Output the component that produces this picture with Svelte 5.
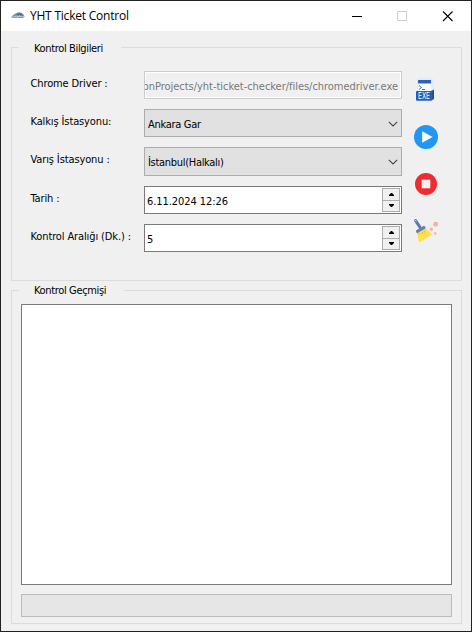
<script>
  const fields = [
    { label: 'Chrome Driver :', kind: 'path', value: 'onProjects/yht-ticket-checker/files/chromedriver.exe' },
    { label: 'Kalkış İstasyonu:', kind: 'select', value: 'Ankara Gar' },
    { label: 'Varış İstasyonu :', kind: 'select', value: 'İstanbul(Halkalı)', tall: true },
    { label: 'Tarih :', kind: 'spin', value: '6.11.2024 12:26', date: true },
    { label: 'Kontrol Aralığı (Dk.) :', kind: 'spin', value: '5' }
  ];
</script>

<div class="window">
  <header>
    <svg class="logo" width="16" height="16" viewBox="0 0 16 16">
      <path d="M1 9.3 Q5 4.8 9 4.3 Q13 4.8 14.6 8.5 L13 10 L2 10Z" fill="#7994ae" />
      <path d="M6 6 L11 5 L13 7 L8 8Z" fill="#456f98" />
      <path d="M1 9.5 L7 8.2 L14 8.8 M7 10 L10 7" stroke="#d7e2ea" stroke-width=".7" fill="none" />
    </svg>
    <span class="title">YHT Ticket Control</span>
    <svg class="controls" width="138" height="29" viewBox="0 0 138 29" shape-rendering="crispEdges">
      <path d="M19 14.5H29" stroke="#000" />
      <rect x="64.5" y="9.5" width="9" height="9" fill="none" stroke="#ccc" />
      <path d="M110 9.5L119.5 19M119.5 9.5L110 19" stroke="#000" stroke-width="1.1" shape-rendering="auto" />
    </svg>
  </header>

  <main>
    <section class="group info">
      <h2>Kontrol Bilgileri</h2>
      <div class="form">
        {#each fields as f}
          <div class="row" class:tall={f.tall}>
            <span class="label">{f.label}</span>
            <div class="field {f.kind}">
              <span class="value" class:date={f.date}>{f.value}</span>
              {#if f.kind === 'select'}
                <svg class="chevron" width="10" height="6" viewBox="0 0 10 6"><path d="M.8 .8L5 5L9.2 .8" fill="none" stroke="#444" stroke-width="1.1" /></svg>
              {:else if f.kind === 'spin'}
                <div class="arrows">
                  <i><svg width="5" height="3" viewBox="0 0 5 3"><path d="M0 3V2L2 0H3L5 2V3Z" /></svg></i>
                  <i><svg width="5" height="3" viewBox="0 0 5 3"><path d="M0 0V1L2 3H3L5 1V0Z" /></svg></i>
                </div>
              {/if}
            </div>
          </div>
        {/each}
      </div>
      <div class="actions">
        <svg width="24" height="24" viewBox="0 0 24 24">
          <path d="M3 1.5Q3 0 4.5 0H18L20 2V18H3Z" fill="#e4eaf8" />
          <rect x="4" y="2" width="13" height="11" fill="#fff" />
          <path d="M4 2H17V5.5H4Z" fill="#2864bc" />
          <path d="M5 7.5L7.5 9.5L5 11.5M8 11.5H11" fill="none" stroke="#3470c0" stroke-width="1" />
          <path d="M17 13L20 11.5V21L17.5 22.5Z" fill="#20529c" />
          <rect x="2" y="13" width="16" height="9.7" rx="1" fill="#285eb5" />
          <text x="4" y="21" textLength="12" lengthAdjust="spacingAndGlyphs" font-size="8.5" fill="#fff">EXE</text>
        </svg>
        <svg width="24" height="24" viewBox="0 0 24 24">
          <circle cx="12" cy="12" r="12" fill="#2196f3" />
          <path d="M8.2 6.2L18.5 12L8.2 17.8Z" fill="#fff" />
        </svg>
        <svg width="24" height="24" viewBox="0 0 24 24">
          <circle cx="12" cy="12" r="11" fill="#ee2c30" />
          <rect x="7.7" y="7.7" width="8.6" height="8.6" fill="#f5eff0" />
        </svg>
        <svg width="24" height="24" viewBox="0 0 24 24">
          <path d="M1.6 1.6L7 9.8" stroke="#5977b1" stroke-width="3" stroke-linecap="round" />
          <path d="M1.5 1.4L2.1 2.3" stroke="#c4d0e4" stroke-width="1" stroke-linecap="round" />
          <path d="M2.5 12.8L10.5 8L18.3 15.8L5.2 23.4Z" fill="#ffe04f" />
          <path d="M2.2 11.2L9.8 6.8Q12 7.5 11.4 9.4L3.2 14.2Q1.4 13.2 2.2 11.2Z" fill="#6680b5" />
          <path d="M5 15.5L6 14M8 15L8.5 13M10.5 13.5L10.2 11.7" stroke="#efa34c" stroke-width=".9" />
          <circle cx="21.7" cy="5.2" r="2.4" fill="#f5aaa0" /><circle cx="21.7" cy="5.2" r=".9" fill="#f7c39c" />
          <circle cx="17.2" cy="10.3" r="1.7" fill="#f2b1ac" />
          <circle cx="21.2" cy="14.5" r="1.4" fill="#f5bbb4" />
        </svg>
      </div>
    </section>

    <section class="group history">
      <h2>Kontrol Geçmişi</h2>
      <div class="log"></div>
      <div class="progress"></div>
    </section>
  </main>
</div>

<style>
  .window, .window * { box-sizing: border-box; }
  .window {
    width: 472px; height: 632px; border: 1px solid #222; background: #f0f0f0;
    display: flex; flex-direction: column; overflow: hidden; color: #000;
    font: 11px/14px "DejaVu Sans Condensed", "DejaVu Sans", sans-serif;
    font-stretch: condensed; white-space: nowrap;
  }
  svg { display: block; flex: none; }
  header { height: 30px; flex: none; background: #fff; display: flex; align-items: center; padding-left: 9px; }
  .title { font: 12px/16px "Open Sans", sans-serif; margin-left: 4px; letter-spacing: -0.22px; }
  .controls { margin-left: auto; }
  main { flex: 1; padding: 16px 9px 7px 10px; display: flex; flex-direction: column; gap: 9px; }
  .group { border: 1px solid #dcdcdc; position: relative; }
  h2 {
    position: absolute; top: -6px; left: 7px; width: 102px; height: 14px; margin: 0; padding-left: 15px;
    background: #f0f0f0; font: inherit; letter-spacing: -0.35px;
  }
  .history h2 { top: -7px; width: 105px; }
  .info { height: 234px; display: flex; padding: 23px 0 0 18px; }
  .form { width: 372px; display: flex; flex-direction: column; gap: 10px; }
  .row { height: 28px; display: flex; }
  .tall { height: 29px; }
  .label { width: 114px; padding-top: 6px; padding-left: 0.5px; letter-spacing: -0.12px; }
  .field { width: 258px; border: 1px solid #adadad; display: flex; align-items: center; padding-left: 3px; background: #e1e1e1; overflow: hidden; }
  .value { padding-top: 3px; letter-spacing: -0.3px; }
  .value.date { letter-spacing: -0.07px; }
  .path { background: #f0f0f0; border-color: #ccc; box-shadow: inset 0 0 0 1px #fff; color: #787878; justify-content: flex-end; padding: 0 3px 0 0; }
  .path .value { letter-spacing: -0.03px; }
  .spin { background: #fff; border-color: #7a7a7a; padding-left: 2px; }
  .chevron { margin-left: auto; margin-right: 3px; margin-top: 1px; }
  .arrows { margin-left: auto; margin-right: 1px; width: 18px; height: 24px; display: flex; flex-direction: column; }
  .arrows i { flex: 1; border: 1px solid #adadad; background: #f0f0f0; display: flex; align-items: center; justify-content: center; }
  .arrows i + i { border-top: 0; }
  .actions { margin-left: 12px; padding-top: 7px; display: flex; flex-direction: column; gap: 23px; }
  .actions svg { overflow: visible; }
  .history { flex: 1; padding: 13px 9px 6px; display: flex; flex-direction: column; gap: 9px; }
  .log { flex: 1; background: #fff; border: 1px solid #7a7a7a; }
  .progress { height: 23px; background: #e6e6e6; border: 1px solid #bcbcbc; }
</style>
